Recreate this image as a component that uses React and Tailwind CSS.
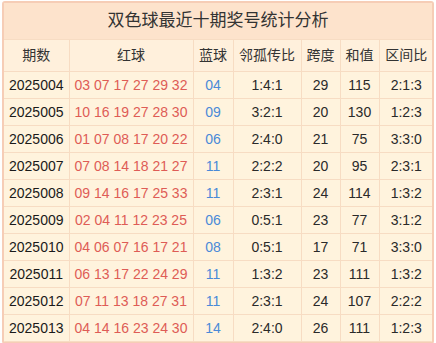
import React from "react";

const rows = [
  ["2025004", "03 07 17 27 29 32", "04", "1:4:1", "29", "115", "2:1:3"],
  ["2025005", "10 16 19 27 28 30", "09", "3:2:1", "20", "130", "1:2:3"],
  ["2025006", "01 07 08 17 20 22", "06", "2:4:0", "21", "75", "3:3:0"],
  ["2025007", "07 08 14 18 21 27", "11", "2:2:2", "20", "95", "2:3:1"],
  ["2025008", "09 14 16 17 25 33", "11", "2:3:1", "24", "114", "1:3:2"],
  ["2025009", "02 04 11 12 23 25", "06", "0:5:1", "23", "77", "3:1:2"],
  ["2025010", "04 06 07 16 17 21", "08", "0:5:1", "17", "71", "3:3:0"],
  ["2025011", "06 13 17 22 24 29", "11", "1:3:2", "23", "111", "1:3:2"],
  ["2025012", "07 11 13 18 27 31", "11", "2:3:1", "24", "107", "2:2:2"],
  ["2025013", "04 14 16 23 24 30", "14", "2:4:0", "26", "111", "1:2:3"],
];

const headers = ["期数", "红球", "蓝球", "邻孤传比", "跨度", "和值", "区间比"];
const widths = ["w-[65px]", "w-[124px]", "w-[40px]", "w-[68px]", "w-[39px]", "w-[39px]", "w-[54px]"];

export default function App() {
  return (
    <div className="w-[436px] h-[343px] bg-white p-[2px] pt-[1px]">
      <div
        className="w-[432px] border-2 border-[#f6cdb6] rounded-[3px] overflow-hidden bg-[#fff3dd] text-[#222]"
        style={{ fontFamily: '"Liberation Sans", "Noto Sans CJK SC", sans-serif' }}
      >
        <div className="h-[36px] bg-[#fde3cc] flex items-center justify-center text-[17px] text-[#333]">
          双色球最近十期奖号统计分析
        </div>
        <table className="w-full border-collapse table-fixed text-[14px]">
          <thead>
            <tr className="h-[32px] bg-[#fff0dc]">
              {headers.map((h, i) => (
                <th
                  key={h}
                  className={`${widths[i]} font-normal border border-[#f7dcc3] border-l-0 last:border-r-0 text-[#333]`}
                >
                  {h}
                </th>
              ))}
            </tr>
          </thead>
          <tbody>
            {rows.map((r) => (
              <tr key={r[0]} className="h-[27px]">
                <td className="border border-[#f7dcc3] border-l-0 text-center text-[#1a1a1a]">{r[0]}</td>
                <td className="border border-[#f7dcc3] text-center text-[#de5c56] whitespace-nowrap">{r[1]}</td>
                <td className="border border-[#f7dcc3] text-center text-[#4a8ad8]">{r[2]}</td>
                <td className="border border-[#f7dcc3] text-center text-[#2a2a2a]">{r[3]}</td>
                <td className="border border-[#f7dcc3] text-center text-[#2a2a2a]">{r[4]}</td>
                <td className="border border-[#f7dcc3] text-center text-[#2a2a2a]">{r[5]}</td>
                <td className="border border-[#f7dcc3] border-r-0 text-center text-[#2a2a2a]">{r[6]}</td>
              </tr>
            ))}
          </tbody>
        </table>
      </div>
    </div>
  );
}
